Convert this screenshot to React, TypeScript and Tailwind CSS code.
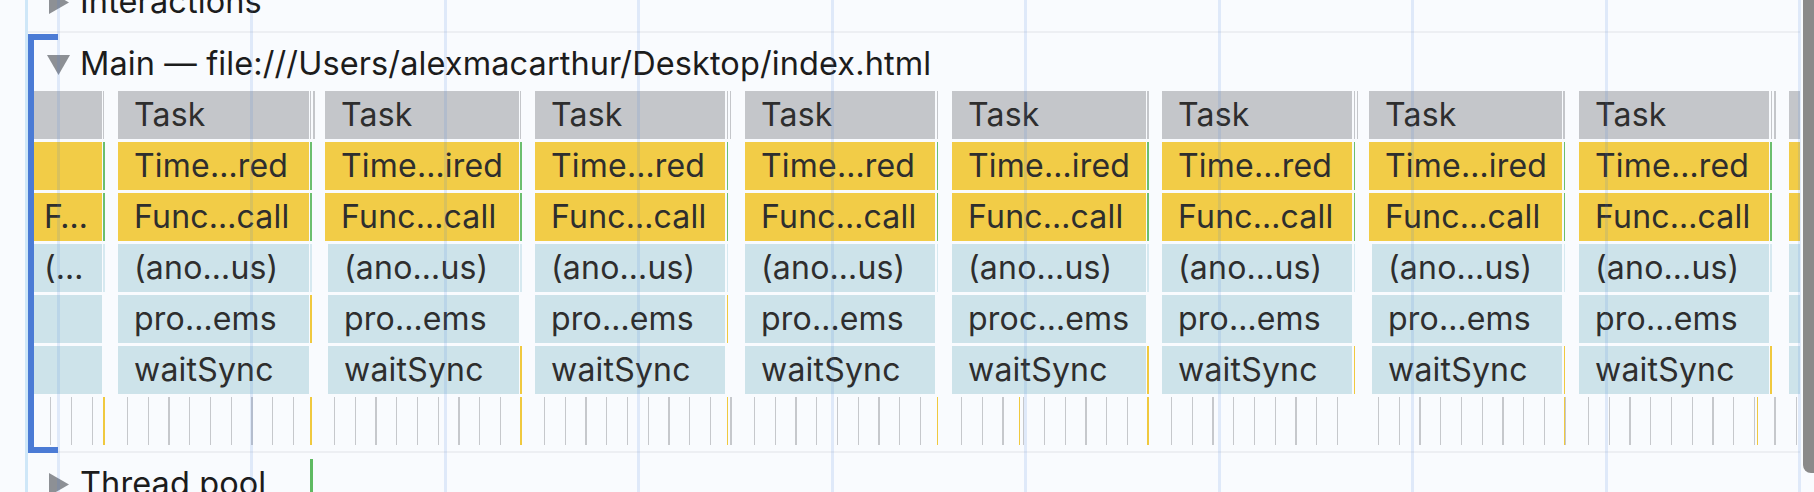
import React from "react";

type Task = {
  x: number;
  end: number;
  title: string;
  time: string;
  func: string;
  ano: string;
  pro: string;
  wait: string;
  inset?: number;
  taskTail: number[];
  proMark?: boolean;
  waitMark?: boolean;
  tickMark?: boolean;
};

const tasks: Task[] = [
  { x: 28, end: 101.5, title: "", time: "", func: "F…", ano: "(…", pro: "", wait: "", taskTail: [1.2], tickMark: true },
  { x: 118, end: 308.5, title: "Task", time: "Time…red", func: "Func…call", ano: "(ano…us)", pro: "pro…ems", wait: "waitSync", taskTail: [1, 4.5], proMark: true, tickMark: true },
  { x: 325, end: 518.6, title: "Task", time: "Time…ired", func: "Func…call", ano: "(ano…us)", pro: "pro…ems", wait: "waitSync", inset: 3, taskTail: [1.2], waitMark: true, tickMark: true },
  { x: 535, end: 725, title: "Task", time: "Time…red", func: "Func…call", ano: "(ano…us)", pro: "pro…ems", wait: "waitSync", taskTail: [1.5, 4.5], proMark: true, tickMark: true },
  { x: 745, end: 935.3, title: "Task", time: "Time…red", func: "Func…call", ano: "(ano…us)", pro: "pro…ems", wait: "waitSync", taskTail: [1.5], tickMark: true },
  { x: 952, end: 1145.7, title: "Task", time: "Time…ired", func: "Func…call", ano: "(ano…us)", pro: "proc…ems", wait: "waitSync", taskTail: [1.5], waitMark: true, tickMark: true },
  { x: 1162, end: 1352, title: "Task", time: "Time…red", func: "Func…call", ano: "(ano…us)", pro: "pro…ems", wait: "waitSync", taskTail: [1.5, 4.5], waitMark: true },
  { x: 1369, end: 1562.2, title: "Task", time: "Time…ired", func: "Func…call", ano: "(ano…us)", pro: "pro…ems", wait: "waitSync", inset: 3, taskTail: [1.2], waitMark: true, tickMark: true },
  { x: 1579, end: 1768.5, title: "Task", time: "Time…red", func: "Func…call", ano: "(ano…us)", pro: "pro…ems", wait: "waitSync", taskTail: [2, 5.5], waitMark: true },
  { x: 1789, end: 1800, title: "", time: "", func: "", ano: "", pro: "", wait: "", taskTail: [] },
];

// track area starts at x=28 on the page
const ORIGIN = 28;

const rows = [
  { key: "title", color: "bg-[#c4c6ca]", inset: false },
  { key: "time", color: "bg-[#f2cc47]", inset: false },
  { key: "func", color: "bg-[#f2cc47]", inset: false },
  { key: "ano", color: "bg-[#cde3ea]", inset: true },
  { key: "pro", color: "bg-[#cde3ea]", inset: true },
  { key: "wait", color: "bg-[#cde3ea]", inset: true },
] as const;

const ticks: number[] = [49.5, 70.5, 91.5];
tasks.slice(1, 9).forEach((t, i) => {
  const next = tasks[i + 2].x;
  for (let p = t.x + 9; p < next - 12; p += 20.7) ticks.push(p);
});
ticks.push(1796);

const yellowTicks = [
  ...tasks.filter((t) => t.tickMark).map((t) => t.end + 1.5),
  1018.5,
  1756.5,
];

const Caret = ({ open }: { open: boolean }) =>
  open ? (
    <svg width="23" height="20" viewBox="0 0 23 20">
      <path d="M0 0 H23 L11.5 20 Z" fill="#8d9095" />
    </svg>
  ) : (
    <svg width="20" height="23" viewBox="0 0 20 23">
      <path d="M0 0 V23 L20 11.5 Z" fill="#8d9095" />
    </svg>
  );

function TrackHeader({ title, open, className }: { title: string; open: boolean; className: string }) {
  return (
    <div className={`flex shrink-0 items-center ${className}`}>
      <div className={`flex w-[52px] shrink-0 ${open ? "pl-[19px]" : "pl-[21px]"}`}>
        <Caret open={open} />
      </div>
      <span className="whitespace-nowrap text-[32.5px] leading-none tracking-[0.1px] text-[#1c1c1c]">{title}</span>
    </div>
  );
}

function FlameRow({ row, index }: { row: (typeof rows)[number]; index: number }) {
  return (
    <div className="relative h-[48px] shrink-0">
      {tasks.map((t, i) => {
        const shift = row.inset && t.inset ? t.inset : 0;
        const label = t[row.key];
        return (
          <React.Fragment key={i}>
            <div
              className={`absolute inset-y-0 flex items-center overflow-hidden whitespace-nowrap pl-[16px] text-[32px] leading-none tracking-[0.2px] text-[#2e2e2e] ${row.color}`}
              style={{ left: t.x + shift - ORIGIN, width: t.end - t.x - shift }}
            >
              {label}
            </div>
            {index === 0 &&
              t.taskTail.map((d) => (
                <div key={d} className="absolute inset-y-0 w-[1.5px] bg-[#c4c6ca]" style={{ left: t.end + d - ORIGIN }} />
              ))}
            {(index === 1 || index === 2) && t.end < 1790 && (
              <div className="absolute inset-y-0 w-[1.7px] bg-[#6cbf6e]" style={{ left: t.end + 1.5 - ORIGIN }} />
            )}
            {index === 3 && t.end < 1790 && (
              <div className="absolute inset-y-0 w-[1.5px] bg-[#d6e9f0]" style={{ left: t.end + 1.5 - ORIGIN }} />
            )}
            {index === 4 && t.proMark && (
              <div className="absolute inset-y-0 w-[1.7px] bg-[#f0c93f]" style={{ left: t.end + 1.5 - ORIGIN }} />
            )}
            {index === 5 && t.waitMark && (
              <div className="absolute inset-y-0 w-[1.7px] bg-[#f0c93f]" style={{ left: t.end + 1.5 - ORIGIN }} />
            )}
          </React.Fragment>
        );
      })}
    </div>
  );
}

function TickRow() {
  return (
    <div className="relative h-[48px] shrink-0">
      {ticks.map((p, i) => (
        <div key={i} className="absolute inset-y-0 w-[1.4px] bg-[#c6c8cc]" style={{ left: p - ORIGIN }} />
      ))}
      {yellowTicks.map((p, i) => (
        <div key={`y${i}`} className="absolute inset-y-0 w-[1.6px] bg-[#f0c93f]" style={{ left: p - ORIGIN }} />
      ))}
    </div>
  );
}

export default function App() {
  return (
    <div className="relative h-[492px] w-[1814px] overflow-hidden bg-[#f9fbfe] font-['Inter','Liberation_Sans',sans-serif]">
      <div className="flex h-full">
        <div className="w-[25px] shrink-0" />
        <div className="w-[3px] shrink-0 bg-[#cfe7f8]" />
        <div className="flex w-[1772px] shrink-0 flex-col">
          <TrackHeader title="Interactions" open={false} className="-mt-[27px] h-[58px]" />
          <div className="h-[2px] shrink-0 bg-[#edeff3]" />

          {/* Main thread */}
          <div className="relative flex shrink-0 flex-col">
            <div className="absolute left-0 top-[1px] z-10 h-[419px] w-[30px] border-y-[6px] border-l-[6px] border-[#4b7bd5]" />
            <TrackHeader title="Main — file:///Users/alexmacarthur/Desktop/index.html" open className="h-[58px] pt-[5px]" />
            <div className="flex flex-col gap-[3px] overflow-hidden pb-[6px]">
              {rows.map((r, i) => (
                <FlameRow key={r.key} row={r} index={i} />
              ))}
              <TickRow />
            </div>
          </div>

          <div className="h-[2px] shrink-0 bg-[#edeff3]" />
          <div className="relative">
            <div className="absolute left-[282px] top-[6px] h-[40px] w-[3px] bg-[#5fba62]" />
            <TrackHeader title="Thread pool" open={false} className="h-[63px]" />
          </div>
        </div>
        <div className="w-[3px] shrink-0" />
        <div className="w-[11px] shrink-0">
          <div className="h-[473px] rounded-bl-[8px] bg-[#8a8a8a]" />
        </div>
      </div>

      {/* time grid */}
      <div className="pointer-events-none absolute inset-0">
        {Array.from({ length: 10 }, (_, i) => (
          <div key={i} className="absolute inset-y-0 w-[3px] bg-[rgba(70,130,220,0.14)]" style={{ left: 56.5 + i * 193.5 }} />
        ))}
      </div>
    </div>
  );
}
